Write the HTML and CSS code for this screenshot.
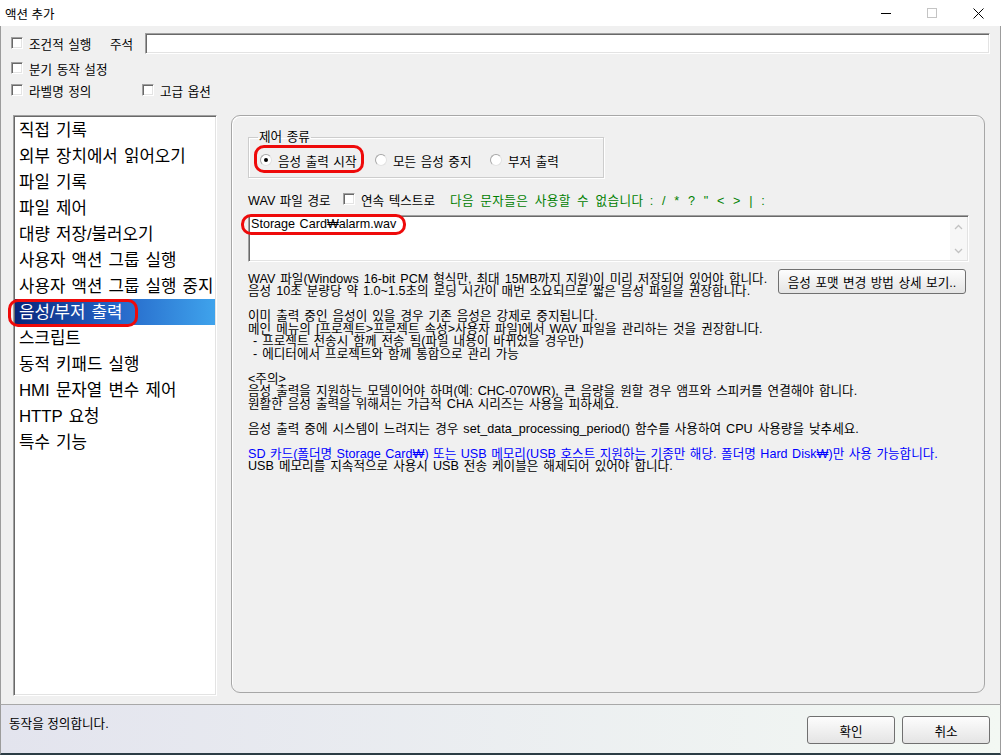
FILE: index.html
```html
<html lang="ko">

<head>
  <meta charset="UTF-8">
  <meta name="viewport" content="width=device-width, initial-scale=1.0">
  <title>액션 추가</title>
  <link rel="stylesheet" href="styles.css">
</head>

<body>
  <div class="window">
    <div class="titlebar">
      <span class="title">액션 추가</span>
      <div class="controls">
        <span class="ctl">
          <svg width="10" height="10" viewBox="0 0 10 10"><path d="M0 5.5H10" stroke="#000" stroke-width="1" /></svg>
        </span>
        <span class="ctl">
          <svg width="10" height="10" viewBox="0 0 10 10"><rect x="0.5" y="0.5" width="9" height="9" fill="none" stroke="#c4c4c4" stroke-width="1" /></svg>
        </span>
        <span class="ctl">
          <svg width="11" height="11" viewBox="0 0 11 11"><path d="M0.5 0.5L10.5 10.5M10.5 0.5L0.5 10.5" stroke="#000" stroke-width="1" /></svg>
        </span>
      </div>
    </div>

    <div class="body">
      <div class="options">
        <div class="opt-row first">
          <label class="check w-cond"><span class="box"></span>조건적 실행</label>
          <span class="memo-label">주석</span>
          <span class="memo-input"></span>
        </div>
        <div class="opt-row">
          <label class="check"><span class="box"></span>분기 동작 설정</label>
        </div>
        <div class="opt-row">
          <label class="check w-label"><span class="box"></span>라벨명 정의</label>
          <label class="check"><span class="box"></span>고급 옵션</label>
        </div>
      </div>

      <div class="main">
        <ul class="action-list">
          <li>직접 기록</li>
          <li>외부 장치에서 읽어오기</li>
          <li>파일 기록</li>
          <li>파일 제어</li>
          <li>대량 저장/불러오기</li>
          <li>사용자 액션 그룹 실행</li>
          <li>사용자 액션 그룹 실행 중지</li>
          <li class="selected">음성/부저 출력</li>
          <li>스크립트</li>
          <li>동적 키패드 실행</li>
          <li>HMI 문자열 변수 제어</li>
          <li>HTTP 요청</li>
          <li>특수 기능</li>
        </ul>
        <span class="mark mark-list"></span>

        <div class="panel">
          <fieldset class="ctl-group">
            <legend>제어 종류</legend>
            <label class="radio"><span class="dot on"></span>음성 출력 시작</label>
            <label class="radio"><span class="dot"></span>모든 음성 중지</label>
            <label class="radio"><span class="dot"></span>부저 출력</label>
          </fieldset>
          <span class="mark mark-radio"></span>

          <div class="path-row">
            <span class="path-label">WAV 파일 경로</span>
            <label class="check w-cont"><span class="box"></span>연속 텍스트로</label>
            <span class="warn">다음 문자들은 사용할 수 없습니다 :<span class="sym">  /  *  ?  "  &lt;  &gt;  |  :</span></span>
          </div>

          <div class="path-box">
            <span class="path-text">Storage Card₩alarm.wav</span>
            <span class="scroll">
              <svg width="9" height="6" viewBox="0 0 9 6"><path d="M1 5L4.5 1.5L8 5" fill="none" stroke="#c2c2c2" stroke-width="1.3" /></svg>
              <svg width="9" height="6" viewBox="0 0 9 6"><path d="M1 1L4.5 4.5L8 1" fill="none" stroke="#c2c2c2" stroke-width="1.3" /></svg>
            </span>
          </div>
          <span class="mark mark-path"></span>

          <div class="info-row">
            <p class="info-first">WAV 파일(Windows 16-bit PCM 형식만, 최대 15MB까지 지원)이 미리 저장되어 있어야 합니다.<br>음성 10초 분량당 약 1.0~1.5초의 로딩 시간이 매번 소요되므로 짧은 음성 파일을 권장합니다.</p>
            <button class="btn btn-detail">음성 포맷 변경 방법 상세 보기..</button>
          </div>

          <div class="notes">
            <p>이미 출력 중인 음성이 있을 경우 기존 음성은 강제로 중지됩니다.<br>메인 메뉴의 [프로젝트&gt;프로젝트 속성&gt;사용자 파일]에서 WAV 파일을 관리하는 것을 권장합니다.<br>&nbsp;- 프로젝트 전송시 함께 전송 됨(파일 내용이 바뀌었을 경우만)<br>&nbsp;- 에디터에서 프로젝트와 함께 통합으로 관리 가능</p>
            <p>&lt;주의&gt;<br>음성 출력을 지원하는 모델이어야 하며(예: CHC-070WR), 큰 음량을 원할 경우 앰프와 스피커를 연결해야 합니다.<br>원활한 음성 출력을 위해서는 가급적 CHA 시리즈는 사용을 피하세요.</p>
            <p>음성 출력 중에 시스템이 느려지는 경우 set_data_processing_period() 함수를 사용하여 CPU 사용량을 낮추세요.</p>
            <p><span class="blue">SD 카드(폴더명 Storage Card₩) 또는 USB 메모리(USB 호스트 지원하는 기종만 해당. 폴더명 Hard Disk₩)만 사용 가능합니다.</span><br>USB 메모리를 지속적으로 사용시 USB 전송 케이블은 해제되어 있어야 합니다.</p>
          </div>
        </div>
      </div>
    </div>

    <div class="statusbar">
      <span class="status-text">동작을 정의합니다.</span>
      <div class="actions">
        <button class="btn btn-ok">확인</button>
        <button class="btn btn-ok">취소</button>
      </div>
    </div>
  </div>
</body>

</html>
```

FILE: styles.css
```css
* {
  box-sizing: border-box;
}

body {
  margin: 0;
  font-family: "Liberation Sans", "Noto Sans CJK KR", sans-serif;
  font-size: 12.6px;
  color: #000;
  background: #f0f0f0;
}

.window {
  width: 1001px;
  height: 755px;
  display: flex;
  flex-direction: column;
  overflow: hidden;
}

/* title bar */
.titlebar {
  height: 26px;
  flex: none;
  display: flex;
  align-items: center;
  background: #fff;
}

.title {
  padding-left: 5px;
  font-family: "Noto Sans CJK KR", sans-serif;
  font-size: 12.5px;
}

.controls {
  margin-left: auto;
  display: flex;
  height: 26px;
}

.ctl {
  width: 46px;
  display: flex;
  align-items: center;
  justify-content: center;
}

/* dialog body */
.body {
  flex: none;
  height: 678px;
  border-left: 1px solid #9c9c9c;
  border-right: 1px solid #9c9c9c;
  padding-top: 7px;
}

.options {
  padding-left: 10px;
}

.opt-row {
  display: flex;
  align-items: center;
  height: 22px;
}

.opt-row.first {
  height: 20px;
  margin-bottom: 4px;
}

.check {
  display: flex;
  align-items: center;
  white-space: nowrap;
  word-spacing: 1px;
}

.box {
  width: 12px;
  height: 12px;
  margin-right: 6px;
  background: #fff;
  border: 1px solid;
  border-color: #a0a0a0 #fff #fff #a0a0a0;
  box-shadow: inset 1px 1px 0 #696969, inset -1px -1px 0 #e3e3e3;
}

.w-cond {
  width: 99px;
}

.w-label {
  width: 131px;
}

.memo-label {
  width: 35px;
}

.memo-input {
  flex: 1;
  height: 21px;
  margin-right: 10px;
  background: #fff;
  border: 1px solid;
  border-color: #a0a0a0 #fff #fff #a0a0a0;
  box-shadow: inset 1px 1px 0 #696969, inset -1px -1px 0 #e3e3e3;
}

/* list + panel */
.main {
  position: relative;
  display: flex;
  gap: 14px;
  height: 581px;
  margin-top: 14px;
  padding-left: 12px;
}

.action-list {
  list-style: none;
  margin: 0;
  padding: 1px;
  width: 204px;
  height: 581px;
  background: #fff;
  border: 1px solid;
  border-color: #a0a0a0 #fff #fff #a0a0a0;
  box-shadow: inset 1px 1px 0 #696969, inset -1px -1px 0 #e3e3e3;
  font-size: 16.8px;
  word-spacing: 1.5px;
}

.action-list li {
  height: 26px;
  line-height: 27px;
  padding-left: 4px;
  white-space: nowrap;
}

.action-list li.selected {
  color: #fff;
  background: linear-gradient(to right, #08247a 0%, #2566c8 50%, #3fa3ec 100%);
}

.mark {
  position: absolute;
  border: 3px solid #ee0a0a;
  border-radius: 10px;
}

.mark-list {
  left: 7px;
  top: 184px;
  width: 130px;
  height: 28px;
}

.panel {
  position: relative;
  width: 754px;
  height: 578px;
  padding: 14px 15px 0 16px;
  border: 1px solid #a7a7a7;
  border-radius: 9px;
  box-shadow: inset 1px 1px 0 #fff;
}

.ctl-group {
  margin: 0;
  width: 323px;
  height: 48px;
  padding: 0 0 0 9px;
  border: 1px solid #cdcdcd;
  box-shadow: 1px 1px 0 #fff, inset 1px 1px 0 #fff;
  display: flex;
  align-items: center;
}

.ctl-group legend {
  padding: 0 1px;
  line-height: 14px;
  word-spacing: 1px;
}

.radio {
  display: flex;
  align-items: center;
  width: 115px;
  white-space: nowrap;
  word-spacing: 1px;
  margin-top: -1px;
}

.dot {
  position: relative;
  width: 12px;
  height: 12px;
  margin: 0 6px 0 2px;
  border-radius: 50%;
  background: #fff;
  border: 1px solid;
  border-color: #a6a6a6 #e2e2e2 #e2e2e2 #a6a6a6;
}

.dot.on::after {
  content: "";
  position: absolute;
  left: 3px;
  top: 3px;
  width: 4px;
  height: 4px;
  border-radius: 50%;
  background: #000;
}

.mark-radio {
  left: 22px;
  top: 29px;
  width: 110px;
  height: 28px;
}

.path-row {
  display: flex;
  align-items: center;
  height: 16px;
  margin-top: 13px;
  white-space: nowrap;
  word-spacing: 1px;
}

.path-label {
  width: 95px;
}

.w-cont {
  width: 107px;
}

.warn {
  color: #008000;
  white-space: pre;
  word-spacing: 2.5px;
  letter-spacing: 0.4px;
}

.warn .sym {
  word-spacing: 0;
  letter-spacing: 0.6px;
}

.path-box {
  display: flex;
  height: 47px;
  margin-top: 8px;
  background: #fff;
  border: 1px solid;
  border-color: #a0a0a0 #fff #fff #a0a0a0;
  box-shadow: inset 1px 1px 0 #696969, inset -1px -1px 0 #e3e3e3;
}

.path-text {
  flex: 1;
  padding: 1px 2px 0;
  line-height: 14px;
  word-spacing: 1px;
}

.scroll {
  width: 17px;
  margin: 1px 1px 1px 0;
  background: #f7f7f7;
  display: flex;
  flex-direction: column;
  align-items: center;
  justify-content: space-between;
  padding: 7px 0 6px;
}

.mark-path {
  left: 9px;
  top: 98px;
  width: 165px;
  height: 21px;
}

.info-row {
  display: flex;
  align-items: flex-start;
  margin-top: 7px;
}

.info-first {
  margin: 0;
  padding-top: 3.5px;
  line-height: 12.5px;
  white-space: nowrap;
  word-spacing: 1.5px;
}

.btn {
  font-family: "Liberation Sans", "Noto Sans CJK KR", sans-serif;
  font-size: 12.6px;
  color: #000;
  background: linear-gradient(#fdfdfd, #e4e4e4);
  border: 1px solid #707070;
  border-radius: 3px;
  padding: 0;
  word-spacing: 1px;
}

.btn-detail {
  margin-left: auto;
  margin-right: 3px;
  width: 188px;
  height: 25px;
}

.notes {
  margin-top: 12.5px;
  line-height: 12.5px;
  white-space: nowrap;
  word-spacing: 1.5px;
}

.notes p {
  margin: 0 0 12.5px;
}

.blue {
  color: #0000ff;
  word-spacing: 1px;
}

/* status bar */
.statusbar {
  flex: none;
  height: 51px;
  display: flex;
  align-items: flex-start;
  border-top: 1px solid #a8a8a8;
  border-left: 1px solid #9c9c9c;
  border-right: 1px solid #9c9c9c;
  border-bottom: 2px solid #2c3d45;
  background: linear-gradient(to right, #e3e4ee, #f3f8f3);
}

.status-text {
  margin: 8px 0 0 8px;
}

.actions {
  margin-left: auto;
  margin-right: 10px;
  margin-top: 11px;
  display: flex;
  gap: 7px;
}

.btn-ok {
  width: 88px;
  height: 28px;
}
```
